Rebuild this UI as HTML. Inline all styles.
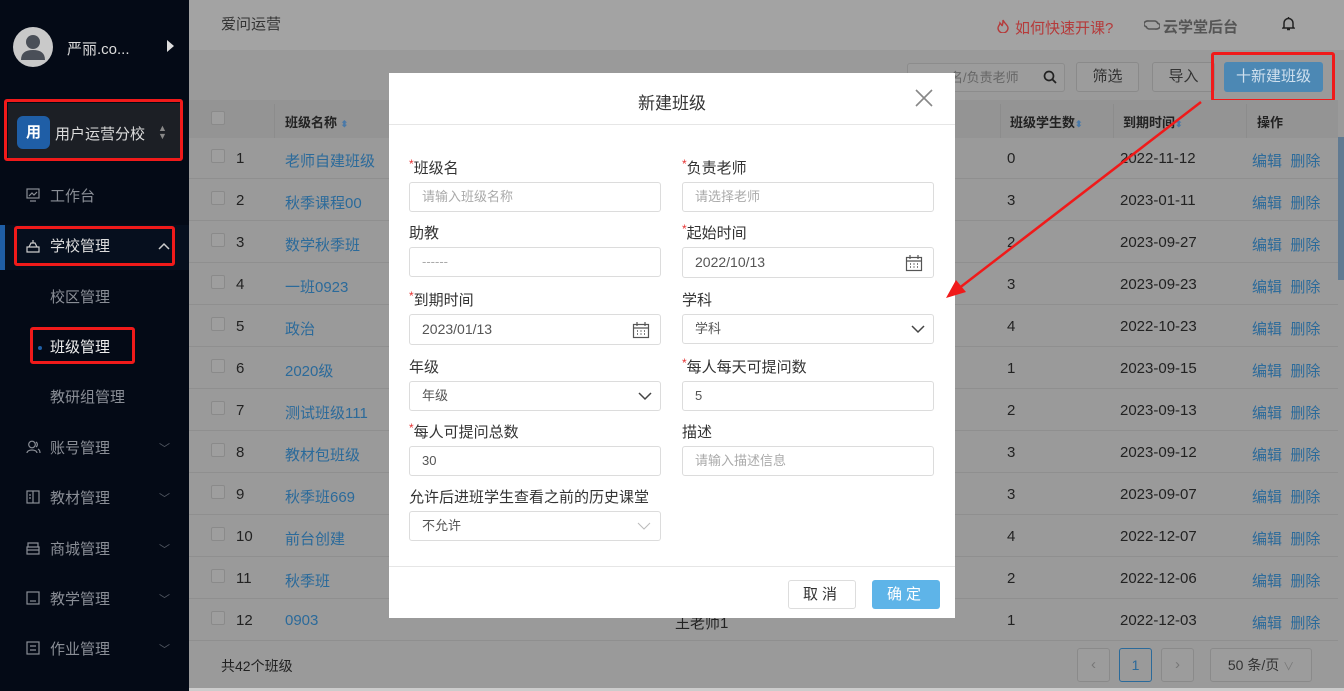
<!DOCTYPE html>
<html><head><meta charset="utf-8"><style>
*{box-sizing:border-box;margin:0;padding:0}
body{width:1344px;height:691px;overflow:hidden;position:relative;background:#9a9a9a;font-family:"Liberation Sans","Noto Sans CJK SC",sans-serif;color:#222}
.a{position:absolute;white-space:nowrap}
.sb{left:0;top:0;width:189px;height:691px;background:#040a16}
.mi{color:#8a8e96;font-size:15px}
.chev{color:#555b66;font-size:11px}
.hdr{left:189px;top:0;width:1155px;height:50px;background:#a3a3a3}
.tb{left:189px;top:100px;width:1149px;height:38px;background:#949494}
.row{left:189px;width:1149px;height:42px;border-bottom:1px solid #8f8f8f}
.cb{width:14px;height:14px;border:1px solid #8a8a8a;border-radius:2px;background:#9e9e9e}
.ln{color:#2b6a9a;font-size:15px;margin-top:2px}
.tx{font-size:15px;color:#222;margin-top:2px}
.red{border:3px solid #f01a1a;border-radius:3px}
.modal{left:389px;top:73px;width:566px;height:545px;background:#fff}
.lb{font-size:15px;color:#333}
.lb b{color:#e53333;font-weight:normal;font-size:12px;vertical-align:top}
.in{width:252px;height:30px;border:1px solid #dcdcdc;border-radius:3px;font-size:13px;color:#555;padding:0 12px;line-height:28px}
.ph{color:#aaa}
.btn{border:1px solid #8a8a8a;border-radius:3px;font-size:15px;color:#333;text-align:center;background:#9c9c9c}
.ic{position:absolute}
</style></head><body>
<!-- sidebar -->
<div class="a sb"></div>
<div class="a" style="left:13px;top:27px;width:40px;height:40px;border-radius:50%;background:#c9c9c9;overflow:hidden">
<svg width="40" height="40"><circle cx="20" cy="15" r="7" fill="#4a4f58"/><path d="M8 33 Q8 23 20 23 Q32 23 32 33 Z" fill="#4a4f58"/></svg></div>
<div class="a" style="left:67px;top:38px;color:#ddd;font-size:15px">严丽.co...</div>
<div class="a" style="left:167px;top:40px;width:0;height:0;border-left:7px solid #ddd;border-top:6px solid transparent;border-bottom:6px solid transparent"></div>
<div class="a" style="left:8px;top:103px;width:172px;height:55px;background:#1c1f25"></div>
<div class="a" style="left:17px;top:116px;width:33px;height:33px;border-radius:6px;background:#1f5ea6;color:#fff;font-size:15px;text-align:center;line-height:33px;font-weight:bold">用</div>
<div class="a" style="left:55px;top:123px;color:#ddd;font-size:15px">用户运营分校</div>
<div class="a" style="left:158px;top:124px;color:#888;font-size:9px;line-height:8px">▲<br>▼</div>
<div class="a red" style="left:4px;top:99px;width:179px;height:62px"></div>
<svg class="ic" style="left:26px;top:188px" width="14" height="14"><rect x="1" y="1" width="12" height="9" fill="none" stroke="#8a8e96" stroke-width="1.2"/><path d="M3 8l3-3 2 2 3-3M4 13h6" fill="none" stroke="#8a8e96" stroke-width="1.2"/></svg>
<div class="a mi" style="left:50px;top:185px">工作台</div>
<div class="a" style="left:0;top:225px;width:189px;height:45px;background:#060f1e"></div>
<div class="a" style="left:0;top:225px;width:5px;height:45px;background:#1f5ea6"></div>
<svg class="ic" style="left:26px;top:239px" width="14" height="14"><path d="M1 13h12v-5H1zM3 8l2-4h4l2 4M7 4V1" fill="none" stroke="#ccc" stroke-width="1.2"/></svg>
<div class="a" style="left:50px;top:235px;color:#ddd;font-size:15px">学校管理</div>
<svg class="ic" style="left:158px;top:242px" width="12" height="8"><path d="M1 7l5-5 5 5" fill="none" stroke="#ccc" stroke-width="1.5"/></svg>
<div class="a red" style="left:14px;top:226px;width:161px;height:40px"></div>
<div class="a mi" style="left:50px;top:286px">校区管理</div>
<div class="a" style="left:38px;top:346px;width:4px;height:4px;border-radius:50%;background:#1f5ea6"></div>
<div class="a" style="left:50px;top:336px;color:#eee;font-size:15px">班级管理</div>
<div class="a red" style="left:30px;top:327px;width:105px;height:37px"></div>
<div class="a mi" style="left:50px;top:386px">教研组管理</div>
<svg class="ic" style="left:26px;top:440px" width="15" height="14"><circle cx="6" cy="4.5" r="3.3" fill="none" stroke="#8a8e96" stroke-width="1.2"/><path d="M1 13c0-4 10-4 10 0M10 2a3 3 0 0 1 0 5M12 9c2 1 2 3 2 4" fill="none" stroke="#8a8e96" stroke-width="1.2"/></svg>
<div class="a mi" style="left:50px;top:437px">账号管理</div><div class="a chev" style="left:159px;top:440px">﹀</div>
<svg class="ic" style="left:26px;top:490px" width="14" height="14"><rect x="1" y="1" width="12" height="12" fill="none" stroke="#8a8e96" stroke-width="1.2"/><path d="M7 1v12M3 5h2M3 8h2" stroke="#8a8e96" stroke-width="1.2"/></svg>
<div class="a mi" style="left:50px;top:487px">教材管理</div><div class="a chev" style="left:159px;top:490px">﹀</div>
<svg class="ic" style="left:26px;top:541px" width="14" height="14"><path d="M2 6V2h10v4M1 6h12v7H1zM1 9h12" fill="none" stroke="#8a8e96" stroke-width="1.2"/></svg>
<div class="a mi" style="left:50px;top:538px">商城管理</div><div class="a chev" style="left:159px;top:541px">﹀</div>
<svg class="ic" style="left:26px;top:591px" width="14" height="14"><rect x="1" y="1" width="12" height="12" fill="none" stroke="#8a8e96" stroke-width="1.2"/><path d="M4 10h6" stroke="#8a8e96" stroke-width="1.2"/></svg>
<div class="a mi" style="left:50px;top:588px">教学管理</div><div class="a chev" style="left:159px;top:591px">﹀</div>
<svg class="ic" style="left:26px;top:641px" width="14" height="14"><rect x="1" y="1" width="12" height="12" fill="none" stroke="#8a8e96" stroke-width="1.2"/><path d="M4 5h6M4 9h6" stroke="#8a8e96" stroke-width="1.2"/></svg>
<div class="a mi" style="left:50px;top:638px">作业管理</div><div class="a chev" style="left:159px;top:641px">﹀</div>
<!-- header -->
<div class="a hdr"></div>
<div class="a" style="left:221px;top:13px;font-size:15px;color:#333">爱问运营</div>
<svg class="ic" style="left:997px;top:19px" width="12" height="14"><path d="M6 1C7 4 11 6 11 9a5 5 0 0 1-10 0c0-2 2-3 2-5 1 1 2 2 2 3 1-2 1-4 1-6z" fill="none" stroke="#b53a3a" stroke-width="1.4"/></svg>
<div class="a" style="left:1015px;top:17px;font-size:15px;color:#b53a3a">如何快速开课?</div>
<svg class="ic" style="left:1144px;top:19px" width="16" height="12"><path d="M3 8a4 3 0 0 1 2-6h6a4 4 0 0 1 3 3M13 4a4 3 0 0 1-2 6H5A4 4 0 0 1 2 7" fill="none" stroke="#555" stroke-width="1.6"/></svg>
<div class="a" style="left:1163px;top:16px;font-size:15px;color:#555;font-weight:bold">云学堂后台</div>
<svg class="ic" style="left:1282px;top:16px" width="13" height="15"><path d="M2 11V7a4.5 4.5 0 0 1 9 0v4l1 1H1zM5 13.5h3M6.5 1v1.5" fill="none" stroke="#222" stroke-width="1.5"/></svg>
<!-- toolbar -->
<div class="a" style="left:907px;top:63px;width:158px;height:29px;border:1px solid #8c8c8c;border-radius:3px;background:#9c9c9c;font-size:13px;color:#666;line-height:27px;padding-left:42px">名/负责老师</div>
<svg class="ic" style="left:1043px;top:70px" width="14" height="14"><circle cx="6" cy="6" r="4.5" fill="none" stroke="#222" stroke-width="1.7"/><path d="M9.5 9.5l3.5 3.5" stroke="#222" stroke-width="1.8"/></svg>
<div class="a btn" style="left:1076px;top:62px;width:63px;height:30px;line-height:28px">筛选</div>
<div class="a btn" style="left:1152px;top:62px;width:63px;height:30px;line-height:28px">导入</div>
<div class="a" style="left:1224px;top:62px;width:99px;height:30px;border-radius:3px;background:#4c88b4;color:#cfe0ee;font-size:15px;text-align:center;line-height:30px">十新建班级</div>
<div class="a red" style="left:1211px;top:52px;width:124px;height:50px"></div>
<!-- table -->
<div class="a tb"></div>
<div class="a cb" style="left:211px;top:111px"></div>
<div class="a" style="left:274px;top:104px;width:1px;height:34px;background:#8c8c8c"></div>
<div class="a" style="left:285px;top:112px;font-size:13px;font-weight:bold;color:#222">班级名称 <span style="color:#4a79a8;font-size:9px">⬍</span></div>
<div class="a" style="left:1000px;top:104px;width:1px;height:34px;background:#8c8c8c"></div>
<div class="a" style="left:1010px;top:112px;font-size:13px;font-weight:bold;color:#222">班级学生数<span style="color:#4a79a8;font-size:9px">⬍</span></div>
<div class="a" style="left:1113px;top:104px;width:1px;height:34px;background:#8c8c8c"></div>
<div class="a" style="left:1123px;top:112px;font-size:13px;font-weight:bold;color:#222">到期时间<span style="color:#4a79a8;font-size:9px">⬍</span></div>
<div class="a" style="left:1246px;top:104px;width:1px;height:34px;background:#8c8c8c"></div>
<div class="a" style="left:1257px;top:112px;font-size:13px;font-weight:bold;color:#222">操作</div>
<div class="a" style="left:1338px;top:137px;width:6px;height:143px;background:#607a92"></div>

<div class="a row" style="top:137px"></div><div class="a cb" style="left:211px;top:149px"></div><div class="a tx" style="left:236px;top:148px">1</div><div class="a ln" style="left:285px;top:148px">老师自建班级</div><div class="a tx" style="left:1007px;top:148px">0</div><div class="a tx" style="left:1120px;top:148px">2022-11-12</div><div class="a ln" style="left:1252px;top:148px">编辑 &nbsp;删除</div>
<div class="a row" style="top:179px"></div><div class="a cb" style="left:211px;top:191px"></div><div class="a tx" style="left:236px;top:190px">2</div><div class="a ln" style="left:285px;top:190px">秋季课程00</div><div class="a tx" style="left:1007px;top:190px">3</div><div class="a tx" style="left:1120px;top:190px">2023-01-11</div><div class="a ln" style="left:1252px;top:190px">编辑 &nbsp;删除</div>
<div class="a row" style="top:221px"></div><div class="a cb" style="left:211px;top:233px"></div><div class="a tx" style="left:236px;top:232px">3</div><div class="a ln" style="left:285px;top:232px">数学秋季班</div><div class="a tx" style="left:1007px;top:232px">2</div><div class="a tx" style="left:1120px;top:232px">2023-09-27</div><div class="a ln" style="left:1252px;top:232px">编辑 &nbsp;删除</div>
<div class="a row" style="top:263px"></div><div class="a cb" style="left:211px;top:275px"></div><div class="a tx" style="left:236px;top:274px">4</div><div class="a ln" style="left:285px;top:274px">一班0923</div><div class="a tx" style="left:1007px;top:274px">3</div><div class="a tx" style="left:1120px;top:274px">2023-09-23</div><div class="a ln" style="left:1252px;top:274px">编辑 &nbsp;删除</div>
<div class="a row" style="top:305px"></div><div class="a cb" style="left:211px;top:317px"></div><div class="a tx" style="left:236px;top:316px">5</div><div class="a ln" style="left:285px;top:316px">政治</div><div class="a tx" style="left:1007px;top:316px">4</div><div class="a tx" style="left:1120px;top:316px">2022-10-23</div><div class="a ln" style="left:1252px;top:316px">编辑 &nbsp;删除</div>
<div class="a row" style="top:347px"></div><div class="a cb" style="left:211px;top:359px"></div><div class="a tx" style="left:236px;top:358px">6</div><div class="a ln" style="left:285px;top:358px">2020级</div><div class="a tx" style="left:1007px;top:358px">1</div><div class="a tx" style="left:1120px;top:358px">2023-09-15</div><div class="a ln" style="left:1252px;top:358px">编辑 &nbsp;删除</div>
<div class="a row" style="top:389px"></div><div class="a cb" style="left:211px;top:401px"></div><div class="a tx" style="left:236px;top:400px">7</div><div class="a ln" style="left:285px;top:400px">测试班级111</div><div class="a tx" style="left:1007px;top:400px">2</div><div class="a tx" style="left:1120px;top:400px">2023-09-13</div><div class="a ln" style="left:1252px;top:400px">编辑 &nbsp;删除</div>
<div class="a row" style="top:431px"></div><div class="a cb" style="left:211px;top:443px"></div><div class="a tx" style="left:236px;top:442px">8</div><div class="a ln" style="left:285px;top:442px">教材包班级</div><div class="a tx" style="left:1007px;top:442px">3</div><div class="a tx" style="left:1120px;top:442px">2023-09-12</div><div class="a ln" style="left:1252px;top:442px">编辑 &nbsp;删除</div>
<div class="a row" style="top:473px"></div><div class="a cb" style="left:211px;top:485px"></div><div class="a tx" style="left:236px;top:484px">9</div><div class="a ln" style="left:285px;top:484px">秋季班669</div><div class="a tx" style="left:1007px;top:484px">3</div><div class="a tx" style="left:1120px;top:484px">2023-09-07</div><div class="a ln" style="left:1252px;top:484px">编辑 &nbsp;删除</div>
<div class="a row" style="top:515px"></div><div class="a cb" style="left:211px;top:527px"></div><div class="a tx" style="left:236px;top:526px">10</div><div class="a ln" style="left:285px;top:526px">前台创建</div><div class="a tx" style="left:1007px;top:526px">4</div><div class="a tx" style="left:1120px;top:526px">2022-12-07</div><div class="a ln" style="left:1252px;top:526px">编辑 &nbsp;删除</div>
<div class="a row" style="top:557px"></div><div class="a cb" style="left:211px;top:569px"></div><div class="a tx" style="left:236px;top:568px">11</div><div class="a ln" style="left:285px;top:568px">秋季班</div><div class="a tx" style="left:1007px;top:568px">2</div><div class="a tx" style="left:1120px;top:568px">2022-12-06</div><div class="a ln" style="left:1252px;top:568px">编辑 &nbsp;删除</div>
<div class="a row" style="top:599px"></div><div class="a cb" style="left:211px;top:611px"></div><div class="a tx" style="left:236px;top:610px">12</div><div class="a ln" style="left:285px;top:610px">0903</div><div class="a tx" style="left:675px;top:610px">王老师1</div><div class="a tx" style="left:1007px;top:610px">1</div><div class="a tx" style="left:1120px;top:610px">2022-12-03</div><div class="a ln" style="left:1252px;top:610px">编辑 &nbsp;删除</div>
<!-- footer -->
<div class="a" style="left:221px;top:656px;font-size:14px;color:#222">共42个班级</div>
<div class="a btn" style="left:1077px;top:648px;width:33px;height:34px;line-height:32px;color:#777">‹</div>
<div class="a" style="left:1119px;top:648px;width:33px;height:34px;border:1px solid #2b6a9a;border-radius:3px;color:#2b6a9a;font-size:14px;text-align:center;line-height:32px">1</div>
<div class="a btn" style="left:1161px;top:648px;width:33px;height:34px;line-height:32px;color:#777">›</div>
<div class="a btn" style="left:1210px;top:648px;width:102px;height:34px;line-height:32px;font-size:14px">50 条/页 <span style="color:#777;font-size:11px">∨</span></div>
<div class="a" style="left:189px;top:688px;width:1155px;height:3px;background:#ccc"></div>
<!-- modal -->
<div class="a modal"></div>
<div class="a" style="left:389px;top:124px;width:566px;height:1px;background:#e6e6e6"></div>
<div class="a" style="left:638px;top:89px;font-size:17px;color:#333">新建班级</div>
<svg class="a" style="left:914px;top:88px" width="20" height="20"><path d="M2 2L18 18M18 2L2 18" stroke="#888" stroke-width="1.6"/></svg>
<div class="a lb" style="left:409px;top:157px"><b>*</b>班级名</div>
<div class="a in ph" style="left:409px;top:182px">请输入班级名称</div>
<div class="a lb" style="left:682px;top:157px"><b>*</b>负责老师</div>
<div class="a in ph" style="left:682px;top:182px">请选择老师</div>
<div class="a lb" style="left:409px;top:222px">助教</div>
<div class="a in ph" style="left:409px;top:247px">------</div>
<div class="a lb" style="left:682px;top:222px"><b>*</b>起始时间</div>
<div class="a in" style="left:682px;top:247px;height:31px;font-size:14px">2022/10/13</div>
<div class="a lb" style="left:409px;top:289px"><b>*</b>到期时间</div>
<div class="a in" style="left:409px;top:314px;height:31px;font-size:14px">2023/01/13</div>
<div class="a lb" style="left:682px;top:289px">学科</div>
<div class="a in" style="left:682px;top:314px">学科</div>
<div class="a lb" style="left:409px;top:356px">年级</div>
<div class="a in" style="left:409px;top:381px">年级</div>
<div class="a lb" style="left:682px;top:356px"><b>*</b>每人每天可提问数</div>
<div class="a in" style="left:682px;top:381px">5</div>
<div class="a lb" style="left:409px;top:421px"><b>*</b>每人可提问总数</div>
<div class="a in" style="left:409px;top:446px">30</div>
<div class="a lb" style="left:682px;top:421px">描述</div>
<div class="a in ph" style="left:682px;top:446px">请输入描述信息</div>
<div class="a lb" style="left:409px;top:486px">允许后进班学生查看之前的历史课堂</div>
<div class="a in" style="left:409px;top:511px">不允许</div>
<svg class="a" style="left:905px;top:254px" width="18" height="18"><rect x="1.5" y="3.5" width="15" height="13" fill="none" stroke="#555" stroke-width="1.2"/><path d="M1.5 7h15M5 1v4M13 1v4" stroke="#555" stroke-width="1.2"/><path d="M5 10h1M8.5 10h1M12 10h1M5 13h1M8.5 13h1M12 13h1" stroke="#555" stroke-width="1.5"/></svg>
<svg class="a" style="left:632px;top:321px" width="18" height="18"><rect x="1.5" y="3.5" width="15" height="13" fill="none" stroke="#555" stroke-width="1.2"/><path d="M1.5 7h15M5 1v4M13 1v4" stroke="#555" stroke-width="1.2"/><path d="M5 10h1M8.5 10h1M12 10h1M5 13h1M8.5 13h1M12 13h1" stroke="#555" stroke-width="1.5"/></svg>
<svg class="a" style="left:911px;top:324px" width="14" height="10"><path d="M1 2l6 6 6-6" fill="none" stroke="#444" stroke-width="1.5"/></svg>
<svg class="a" style="left:638px;top:391px" width="14" height="10"><path d="M1 2l6 6 6-6" fill="none" stroke="#444" stroke-width="1.5"/></svg>
<svg class="a" style="left:637px;top:521px" width="14" height="10"><path d="M1 2l6 6 6-6" fill="none" stroke="#bbb" stroke-width="1"/></svg>
<div class="a" style="left:389px;top:566px;width:566px;height:1px;background:#e6e6e6"></div>
<div class="a" style="left:788px;top:580px;width:68px;height:29px;border:1px solid #ddd;border-radius:3px;font-size:15px;text-align:center;line-height:27px;color:#333;letter-spacing:4px">取消</div>
<div class="a" style="left:872px;top:580px;width:68px;height:29px;border-radius:3px;background:#5eb4e8;font-size:15px;text-align:center;line-height:29px;color:#fff;letter-spacing:4px">确定</div>
<!-- arrow -->
<svg class="a" style="left:0;top:0" width="1344" height="691"><line x1="1201" y1="102" x2="958" y2="289" stroke="#f01a1a" stroke-width="2.5"/><path d="M946 298 L956 280 L966 292 Z" fill="#f01a1a"/></svg>
</body></html>
